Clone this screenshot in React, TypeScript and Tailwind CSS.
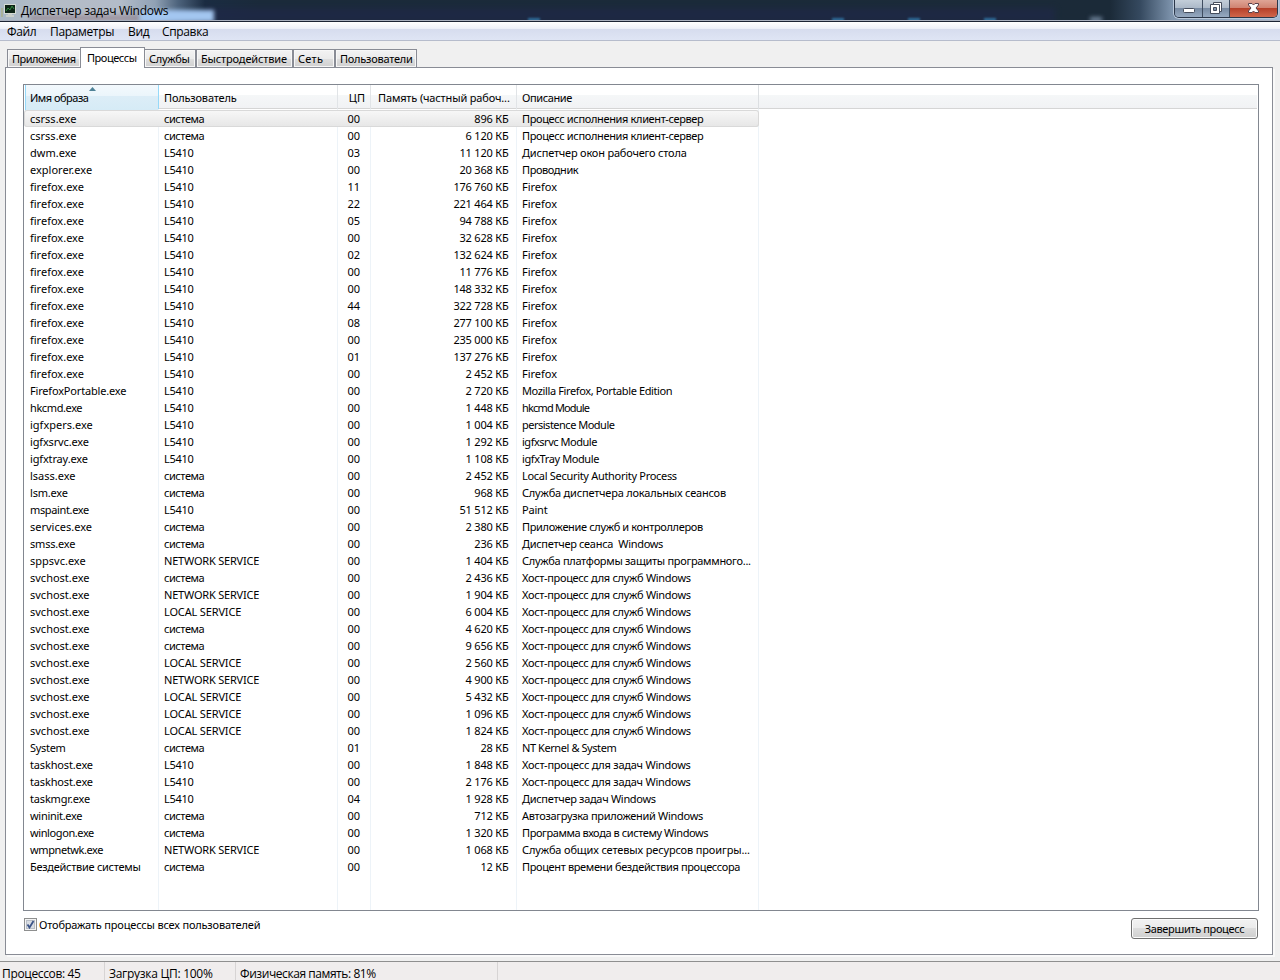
import React from "react";
import { clsx } from "clsx";

type Process = [name: string, user: string, cpu: string, memory: string, description: string];

const SYSTEM = "система";
const SVCHOST = "Хост-процесс для служб Windows";

const processes: Process[] = [
  ["csrss.exe", SYSTEM, "00", "896", "Процесс исполнения клиент-сервер"],
  ["csrss.exe", SYSTEM, "00", "6 120", "Процесс исполнения клиент-сервер"],
  ["dwm.exe", "L5410", "03", "11 120", "Диспетчер окон рабочего стола"],
  ["explorer.exe", "L5410", "00", "20 368", "Проводник"],
  ["firefox.exe", "L5410", "11", "176 760", "Firefox"],
  ["firefox.exe", "L5410", "22", "221 464", "Firefox"],
  ["firefox.exe", "L5410", "05", "94 788", "Firefox"],
  ["firefox.exe", "L5410", "00", "32 628", "Firefox"],
  ["firefox.exe", "L5410", "02", "132 624", "Firefox"],
  ["firefox.exe", "L5410", "00", "11 776", "Firefox"],
  ["firefox.exe", "L5410", "00", "148 332", "Firefox"],
  ["firefox.exe", "L5410", "44", "322 728", "Firefox"],
  ["firefox.exe", "L5410", "08", "277 100", "Firefox"],
  ["firefox.exe", "L5410", "00", "235 000", "Firefox"],
  ["firefox.exe", "L5410", "01", "137 276", "Firefox"],
  ["firefox.exe", "L5410", "00", "2 452", "Firefox"],
  ["FirefoxPortable.exe", "L5410", "00", "2 720", "Mozilla Firefox, Portable Edition"],
  ["hkcmd.exe", "L5410", "00", "1 448", "hkcmd Module"],
  ["igfxpers.exe", "L5410", "00", "1 004", "persistence Module"],
  ["igfxsrvc.exe", "L5410", "00", "1 292", "igfxsrvc Module"],
  ["igfxtray.exe", "L5410", "00", "1 108", "igfxTray Module"],
  ["lsass.exe", SYSTEM, "00", "2 452", "Local Security Authority Process"],
  ["lsm.exe", SYSTEM, "00", "968", "Служба диспетчера локальных сеансов"],
  ["mspaint.exe", "L5410", "00", "51 512", "Paint"],
  ["services.exe", SYSTEM, "00", "2 380", "Приложение служб и контроллеров"],
  ["smss.exe", SYSTEM, "00", "236", "Диспетчер сеанса  Windows"],
  ["sppsvc.exe", "NETWORK SERVICE", "00", "1 404", "Служба платформы защиты программного..."],
  ["svchost.exe", SYSTEM, "00", "2 436", SVCHOST],
  ["svchost.exe", "NETWORK SERVICE", "00", "1 904", SVCHOST],
  ["svchost.exe", "LOCAL SERVICE", "00", "6 004", SVCHOST],
  ["svchost.exe", SYSTEM, "00", "4 620", SVCHOST],
  ["svchost.exe", SYSTEM, "00", "9 656", SVCHOST],
  ["svchost.exe", "LOCAL SERVICE", "00", "2 560", SVCHOST],
  ["svchost.exe", "NETWORK SERVICE", "00", "4 900", SVCHOST],
  ["svchost.exe", "LOCAL SERVICE", "00", "5 432", SVCHOST],
  ["svchost.exe", "LOCAL SERVICE", "00", "1 096", SVCHOST],
  ["svchost.exe", "LOCAL SERVICE", "00", "1 824", SVCHOST],
  ["System", SYSTEM, "01", "28", "NT Kernel & System"],
  ["taskhost.exe", "L5410", "00", "1 848", "Хост-процесс для задач Windows"],
  ["taskhost.exe", "L5410", "00", "2 176", "Хост-процесс для задач Windows"],
  ["taskmgr.exe", "L5410", "04", "1 928", "Диспетчер задач Windows"],
  ["wininit.exe", SYSTEM, "00", "712", "Автозагрузка приложений Windows"],
  ["winlogon.exe", SYSTEM, "00", "1 320", "Программа входа в систему Windows"],
  ["wmpnetwk.exe", "NETWORK SERVICE", "00", "1 068", "Служба общих сетевых ресурсов проигры..."],
  ["Бездействие системы", SYSTEM, "00", "12", "Процент времени бездействия процессора"],
];

// Tahoma is narrower than the fallback font in some letters only, so the
// spacing is corrected per text. Names default to none, descriptions to -0.3px.
const tracking: Record<string, string> = {
  "FirefoxPortable.exe": "tracking-[-0.18px]",
  "hkcmd.exe": "tracking-[-0.4px]",
  "igfxsrvc.exe": "tracking-[-0.15px]",
  "igfxtray.exe": "tracking-[-0.15px]",
  "lsm.exe": "tracking-[-0.2px]",
  "mspaint.exe": "tracking-[-0.36px]",
  "smss.exe": "tracking-[-0.2px]",
  "System": "tracking-[-0.3px]",
  "taskhost.exe": "tracking-[-0.15px]",
  "taskmgr.exe": "tracking-[-0.17px]",
  "wininit.exe": "tracking-[-0.3px]",
  "winlogon.exe": "tracking-[-0.4px]",
  "wmpnetwk.exe": "tracking-[-0.4px]",
  "Бездействие системы": "tracking-[-0.28px]",
  [SYSTEM]: "tracking-[-0.45px]",
  "L5410": "tracking-[-0.3px]",
  "NETWORK SERVICE": "tracking-[-0.2px]",
  "LOCAL SERVICE": "tracking-[-0.15px]",
  "Firefox": "tracking-normal",
  "Paint": "tracking-[-0.2px]",
  "hkcmd Module": "tracking-[-0.83px]",
  "persistence Module": "tracking-[-0.5px]",
  "igfxsrvc Module": "tracking-[-0.47px]",
  "igfxTray Module": "tracking-[-0.4px]",
  "Mozilla Firefox, Portable Edition": "tracking-[-0.38px]",
  "NT Kernel & System": "tracking-[-0.42px]",
  "Проводник": "tracking-[-0.42px]",
  "Процесс исполнения клиент-сервер": "tracking-[-0.35px]",
  "Диспетчер окон рабочего стола": "tracking-[-0.2px]",
  "Служба диспетчера локальных сеансов": "tracking-[-0.2px]",
  "Приложение служб и контроллеров": "tracking-[-0.35px]",
  "Хост-процесс для задач Windows": "tracking-[-0.25px]",
  "Программа входа в систему Windows": "tracking-[-0.42px]",
  "Служба общих сетевых ресурсов проигры...": "tracking-[-0.14px]",
  "Процент времени бездействия процессора": "tracking-[-0.36px]",
};

const tabs = [
  { label: "Приложения", width: "w-[74px]", spacing: "tracking-[-0.5px]" },
  { label: "Процессы", width: "w-[65px]", spacing: "tracking-[-0.45px]", active: true },
  { label: "Службы", width: "w-[52px]", spacing: "tracking-[-0.3px]" },
  { label: "Быстродействие", width: "w-[97px]", spacing: "tracking-[-0.15px]" },
  { label: "Сеть", width: "w-[42px]", spacing: "tracking-[0.3px]" },
  { label: "Пользователи", width: "w-[82px]", spacing: "tracking-[-0.25px]" },
];

// Shared by the header, the rows and the grid lines behind them.
const COLUMNS = "grid grid-cols-[135px_179px_33px_146px_242px]";

function TitleBar() {
  return (
    <div className="relative flex h-[22px] items-start justify-between border-b border-[#1c2434] bg-[linear-gradient(90deg,#a9b9c6_0px,#b4bcc6_60px,#b3bcc9_120px,#90a1b4_155px,#4d637c_178px,#1b2c42_205px,#1b2a3a_260px,#1b2a38_1110px,#35495f_1140px,#7d93ac_1172px,#a4bcd6_1280px)] shadow-[inset_0_-1px_0_#a9b0be]">
      {/* Blurred desktop showing through the glass */}
      <div className="absolute inset-x-0 top-0 h-[20px] overflow-hidden">
        <span className="absolute left-[205px] top-[8px] h-[14px] w-[850px] bg-[#1f2848] opacity-70 blur-[3px]" />
        <span className="absolute left-[30px] top-[15px] h-[6px] w-[110px] bg-[#94848f] opacity-70 blur-[2px]" />
        <span className="absolute left-[140px] top-[10px] h-[12px] w-[74px] bg-[#a3c6f0] blur-[2px]" />
        <span className="absolute left-[528px] top-[18px] h-[3px] w-[12px] bg-[#2f6d9b] blur-[1px]" />
        <span className="absolute left-[832px] top-[18px] h-[3px] w-[12px] bg-[#2f6d9b] blur-[1px]" />
        <span className="absolute left-[908px] top-[18px] h-[3px] w-[12px] bg-[#2f6d9b] blur-[1px]" />
        <span className="absolute left-[984px] top-[18px] h-[3px] w-[12px] bg-[#2f6d9b] blur-[1px]" />
        <span className="absolute left-[1090px] top-[17px] h-[5px] w-[12px] bg-[#6e8299] blur-[2px]" />
      </div>
      <div className="relative flex h-[21px] w-[300px] items-center">
        <svg className="ml-[1px]" width="15" height="15" viewBox="0 0 15 15">
          <path d="M0 5h2v9H0z" fill="#a9b39a" />
          <path d="M3 1h12v10H3z" fill="#d4dbd3" />
          <path d="M4 2h10v8H4z" fill="#0d2416" />
          <path d="M5 8l2-3 2 2 2-4 2 3" fill="none" stroke="#2f8b3d" />
          <path d="M7 11h4v1h2v2H5v-2h2z" fill="#c9cfc9" />
        </svg>
        <span className="ml-[5px] whitespace-pre font-['Open_Sans','Noto_Sans',sans-serif] text-[12px] tracking-[-0.27px] text-black">
          Диспетчер задач Windows
        </span>
      </div>
      <div className="relative mr-[2px] flex h-[18px] overflow-hidden rounded-b-[5px] border border-t-0 border-[#2b3749] shadow-[0_0_0_1px_#b9c8da]">
        <div className="flex w-[28px] items-center justify-center border-r border-[#3f4d60] bg-[linear-gradient(#c3ced9_0%,#acb9c8_46%,#788ba3_50%,#96a9c0_100%)]">
          <svg width="14" height="8" viewBox="0 0 14 8" className="mt-[3px]">
            <rect x="1.5" y="2.5" width="11" height="4" rx="1" fill="#fff" stroke="#454d5c" />
          </svg>
        </div>
        <div className="flex w-[27px] items-center justify-center border-r border-[#3f4d60] bg-[linear-gradient(#c3ced9_0%,#acb9c8_46%,#788ba3_50%,#96a9c0_100%)]">
          <svg width="14" height="14" viewBox="0 0 14 14" className="mb-[2px]">
            <path d="M4.5 1.5h8v9h-8z" fill="#fff" stroke="#454d5c" />
            <path d="M1.5 3.5h9v9h-9z" fill="#fff" stroke="#454d5c" />
            <path d="M4.5 6.5h3v3h-3z" fill="#8094ae" stroke="#454d5c" />
          </svg>
        </div>
        <div className="flex w-[47px] items-center justify-center bg-[linear-gradient(#dfa596_0%,#d08371_46%,#b6412a_50%,#d0664b_100%)]">
          <svg width="13" height="12" viewBox="0 0 13 12" className="mb-[2px]">
            <path d="M1.500 1.500h3.500l1.500 1.500 1.500-1.500h3.500v1.500L9 6l2.500 3v1.500H8L6.500 9 5 10.500H1.500V9L4 6 1.500 3z" fill="#fff" stroke="#59404a" />
          </svg>
        </div>
      </div>
    </div>
  );
}

function MenuBar() {
  return (
    <div className="flex h-[19px] items-center border-b border-[#b6bccc] bg-[linear-gradient(#ffffff_0%,#eef1f9_36%,#d6dcee_38%,#dfe5f4_100%)] pl-[7px] pt-[2px] font-['Open_Sans','Noto_Sans',sans-serif] text-[12px] leading-none tracking-[-0.35px] text-black">
      <span className="w-[43px]">Файл</span>
      <span className="w-[78px]">Параметры</span>
      <span className="w-[34px]">Вид</span>
      <span>Справка</span>
    </div>
  );
}

function TabStrip() {
  return (
    <div className="flex h-[20px] items-end pl-[7px]">
      {tabs.map((tab, i) => (
        <div
          key={tab.label}
          className={clsx(
            "flex shrink-0 items-center border-x border-t border-[#898c95] whitespace-nowrap",
            tab.width,
            tab.spacing,
            i > 0 && i < 3 && "-ml-px",
            tab.active
              ? "relative z-10 -mb-px h-[21px] bg-white pb-[2px] pl-[6px]"
              : "h-[18px] bg-[linear-gradient(#f3f3f3_0%,#ebebeb_50%,#dedede_52%,#d0d0d0_100%)] pl-[4px] shadow-[inset_0_0_0_1px_#f7f7f7]"
          )}
        >
          {tab.label}
        </div>
      ))}
    </div>
  );
}

function ListHeader() {
  return (
    <div className="mx-px flex h-[24px] border-b border-[#d5d5d5] bg-[linear-gradient(#ffffff_0%,#ffffff_42%,#f5f7f8_44%,#f1f2f4_100%)]">
      <div className={clsx(COLUMNS, "-ml-px leading-[26px]")}>
        <span className="relative -mb-px ml-px border border-t-0 border-[#96d9f9] bg-[linear-gradient(#f3f9fd_0%,#ebf5fb_42%,#dcedf7_44%,#d5ebf6_100%)] pl-[4px] tracking-[-0.5px]">
          Имя образа
          <svg className="absolute left-[63px] top-[2px]" width="7" height="4" viewBox="0 0 7 4">
            <path d="M3.500 0L7 4H0z" fill="#4f8297" />
          </svg>
        </span>
        <span className="border-r border-[#e1e4e7] pl-[5px] tracking-[-0.18px]">Пользователь</span>
        <span className="border-r border-[#e1e4e7] pr-[5px] text-right">ЦП</span>
        <span className="border-r border-[#e1e4e7] pl-[7px] whitespace-nowrap tracking-[-0.15px]">Память (частный рабоч...</span>
        <span className="border-r border-[#dcdfe2] pl-[5px] tracking-[-0.4px]">Описание</span>
      </div>
    </div>
  );
}

function ProcessRow({ process, selected }: { process: Process; selected: boolean }) {
  const [name, user, cpu, memory, description] = process;
  return (
    <div
      className={clsx(
        COLUMNS,
        "relative h-[17px] w-[735px] whitespace-pre leading-[17px]",
        selected && "rounded-[3px] bg-[linear-gradient(#f8f8f8,#e6e6e6)] shadow-[inset_0_0_0_1px_#d9d9d9]"
      )}
    >
      <span className={clsx("pl-[6px]", tracking[name])}>{name}</span>
      <span className={clsx("pl-[5px]", tracking[user])}>{user}</span>
      <span className="pr-[11px] text-right">{cpu}</span>
      <span className="pr-[8.5px] text-right tracking-[-0.2px]">{memory} КБ</span>
      <span className={clsx("pl-[5px]", tracking[description] ?? "tracking-[-0.3px]")}>{description}</span>
    </div>
  );
}

function ProcessList() {
  return (
    <div className="relative ml-[17px] mr-[13px] h-[827px] border border-[#828790] bg-white">
      <ListHeader />
      <div className={clsx(COLUMNS, "absolute bottom-0 left-0 top-[24px]")}>
        {[0, 1, 2, 3, 4].map((i) => (
          <span key={i} className="border-r border-[#edf3f8]" />
        ))}
      </div>
      <div className="relative pt-[1px]">
        {processes.map((process, i) => (
          <ProcessRow key={i} process={process} selected={i === 0} />
        ))}
      </div>
    </div>
  );
}

function StatusBar() {
  return (
    <div className="flex h-[19px] border-t border-[#8f8f8f] bg-[#f0eded] font-['Open_Sans','Noto_Sans',sans-serif] text-[12px] leading-[13px]">
      <span className="w-[105px] border-r border-[#d7d4d4] pl-[2px] pt-[5px] tracking-[-0.35px]">Процессов: 45</span>
      <span className="w-[131px] border-r border-[#d7d4d4] pl-[4px] pt-[5px] tracking-[-0.28px]">Загрузка ЦП: 100%</span>
      <span className="w-[262px] border-r border-[#d7d4d4] pl-[4px] pt-[5px] tracking-[-0.43px]">Физическая память: 81%</span>
    </div>
  );
}

export default function App() {
  return (
    <div className="flex h-[980px] w-[1280px] flex-col overflow-hidden bg-[#f0f0f0] font-['Noto_Sans',sans-serif] text-[11px] leading-none text-black">
      <TitleBar />
      <MenuBar />
      <div className="flex flex-col pt-[6px]">
        <TabStrip />
        <div className="ml-[5px] h-[888px] w-[1268px] border border-[#898c95] bg-white pt-[16px] shadow-[2px_2px_0_#f9f9f9]">
          <ProcessList />
          <div className="flex justify-between pl-[18px] pr-[14px] pt-[7px]">
            <div className="flex h-[13px] items-center">
              <span className="flex h-[13px] w-[13px] items-center justify-center border border-[#8e8f8f] bg-[#f4f4f4]">
                <span className="flex h-[9px] w-[9px] items-center justify-center border border-[#b9bec6] bg-[#d9dde3]">
                  <svg width="9" height="9" viewBox="0 0 9 9" className="shrink-0">
                    <path d="M1.500 4.500l2 3L7.500 1" fill="none" stroke="#3c5488" strokeWidth="1.800" />
                  </svg>
                </span>
              </span>
              <span className="ml-[2px] pb-px whitespace-nowrap tracking-[-0.17px]">Отображать процессы всех пользователей</span>
            </div>
            <button className="flex h-[21px] w-[127px] items-center justify-center whitespace-nowrap rounded-[3px] border border-[#707070] bg-[linear-gradient(#f2f2f2_0%,#ebebeb_48%,#dddddd_50%,#cfcfcf_100%)] tracking-[-0.35px] shadow-[inset_0_0_0_1px_#fbfbfb]">
              Завершить процесс
            </button>
          </div>
        </div>
      </div>
      <div className="mt-[6px]">
        <StatusBar />
      </div>
    </div>
  );
}
